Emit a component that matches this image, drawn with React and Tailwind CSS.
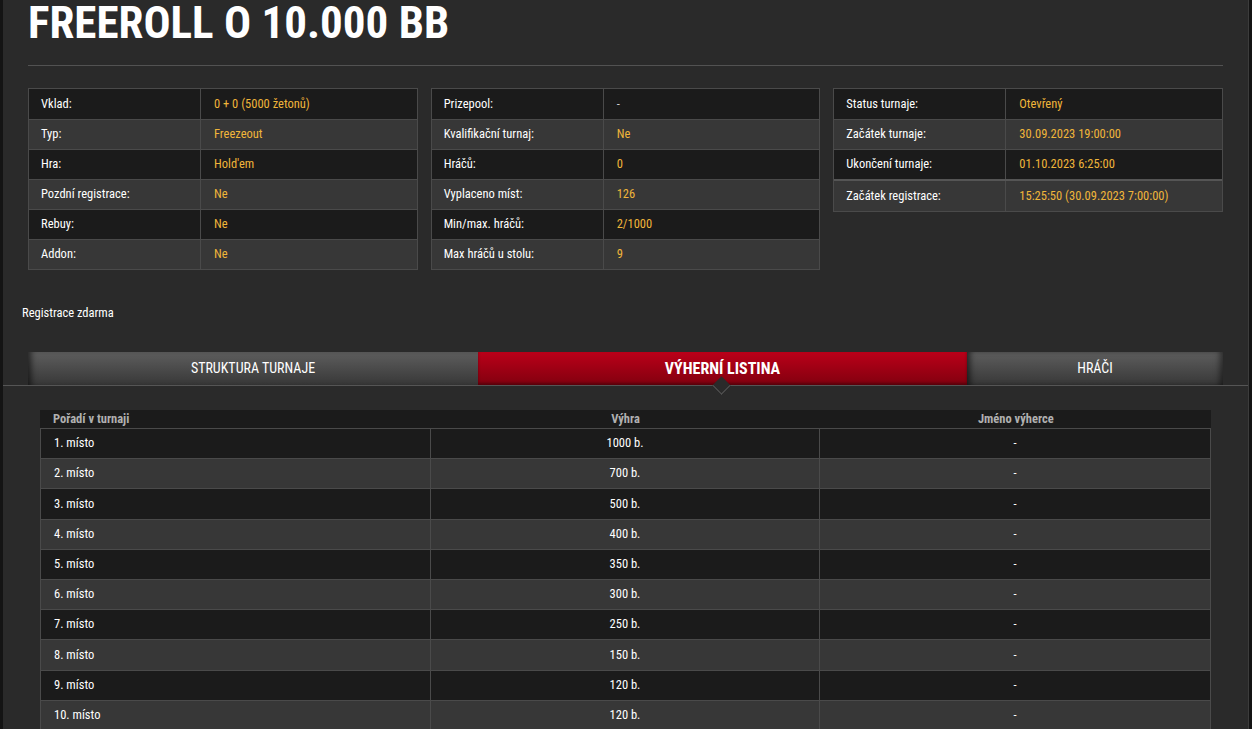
import React from 'react';

const infoLeft = [
  ['Vklad:', '0 + 0 (5000 žetonů)'],
  ['Typ:', 'Freezeout'],
  ['Hra:', "Hold'em"],
  ['Pozdní registrace:', 'Ne'],
  ['Rebuy:', 'Ne'],
  ['Addon:', 'Ne'],
];

const infoMiddle = [
  ['Prizepool:', '-', true],
  ['Kvalifikační turnaj:', 'Ne'],
  ['Hráčů:', '0'],
  ['Vyplaceno míst:', '126'],
  ['Min/max. hráčů:', '2/1000'],
  ['Max hráčů u stolu:', '9'],
];

const infoRight = [
  ['Status turnaje:', 'Otevřený'],
  ['Začátek turnaje:', '30.09.2023 19:00:00'],
  ['Ukončení turnaje:', '01.10.2023 6:25:00'],
  ['Začátek registrace:', '15:25:50 (30.09.2023 7:00:00)'],
];

const prizes = [
  ['1. místo', '1000 b.'],
  ['2. místo', '700 b.'],
  ['3. místo', '500 b.'],
  ['4. místo', '400 b.'],
  ['5. místo', '350 b.'],
  ['6. místo', '300 b.'],
  ['7. místo', '250 b.'],
  ['8. místo', '150 b.'],
  ['9. místo', '120 b.'],
  ['10. místo', '120 b.'],
];

const InfoTable = ({ rows }) => (
  <div className="border border-[#4a4a4a] self-start">
    {rows.map(([label, value, plain], i) => (
      <div
        key={label}
        className={`flex h-[30px] items-center ${i > 0 ? 'border-t border-[#4a4a4a]' : ''} ${
          i % 2 === 0 ? 'bg-[#1b1b1b]' : 'bg-[#373737]'
        } ${i === 3 && rows.length === 4 ? 'h-[32px] border-t-2 border-t-[#555]' : ''}`}
      >
        <div className="w-[172px] h-full flex items-center pl-[12px] text-white border-r border-[#4a4a4a]">
          {label}
        </div>
        <div className={`pl-[13px] ${plain ? 'text-[#cfcfcf]' : 'text-[#f0b53a]'}`}>{value}</div>
      </div>
    ))}
  </div>
);

const App = () => {
  return (
    <div className="min-h-screen bg-[#141414] text-[12.5px] font-['Roboto_Condensed','Liberation_Sans_Narrow','DejaVu_Sans_Condensed',sans-serif]">
      <div className="mx-[3px] min-h-screen bg-[#2a2a2a] border-r border-[#3c3c3c] overflow-hidden">
        <div className="px-[25px]">
          <h1 className="text-[45px] font-bold text-white leading-[46px] pt-0">
            FREEROLL O 10.000 BB
          </h1>
          <div className="mt-[19px] border-t border-[#525252]" />
          <div className="grid grid-cols-3 gap-[13px] mt-[22px]">
            <InfoTable rows={infoLeft} />
            <InfoTable rows={infoMiddle} />
            <InfoTable rows={infoRight} />
          </div>
        </div>

        <p className="pl-[19px] mt-[35px] text-white leading-[16px]">Registrace zdarma</p>

        {/* Tabs */}
        <div className="mt-[31px] px-[25px] flex h-[33px] text-[14px] text-white">
          <div className="w-[450px] flex items-center justify-center bg-gradient-to-b from-[#5e5e5e] to-[#383838] shadow-[inset_6px_0_6px_-3px_rgba(0,0,0,0.6)]">
            STRUKTURA TURNAJE
          </div>
          <div className="w-[489px] flex items-center justify-center text-[16px] font-bold bg-gradient-to-b from-[#bb0019] to-[#82000f] shadow-[inset_0_-2px_3px_rgba(0,0,0,0.35)]">
            VÝHERNÍ LISTINA
          </div>
          <div className="flex-1 flex items-center justify-center bg-gradient-to-b from-[#5e5e5e] to-[#383838] shadow-[inset_6px_0_6px_-3px_rgba(0,0,0,0.6),inset_-6px_0_6px_-3px_rgba(0,0,0,0.5)]">
            HRÁČI
          </div>
        </div>
        <div className="relative border-t border-[#555]">
          <div className="absolute left-[712px] -top-[7px] w-[13px] h-[13px] rotate-45 bg-[#2a2a2a] border-r border-b border-[#555]" />
        </div>

        {/* Prize table */}
        <div className="mx-[37px] mt-[24px]">
          <div className="grid grid-cols-3 h-[18px] items-center bg-[#1b1b1b] text-[#b0b0b0] font-bold">
            <div className="pl-[13px]">Pořadí v turnaji</div>
            <div className="text-center">Výhra</div>
            <div className="text-center">Jméno výherce</div>
          </div>
          <div className="border-l border-r border-[#4a4a4a]">
            {prizes.map(([place, win], i) => (
              <div
                key={place}
                className={`grid grid-cols-3 h-[30.2px] items-center border-t border-[#4a4a4a] text-white ${
                  i % 2 === 0 ? 'bg-[#1b1b1b]' : 'bg-[#373737]'
                }`}
              >
                <div className="pl-[13px] h-full flex items-center border-r border-[#4a4a4a]">{place}</div>
                <div className="h-full flex items-center justify-center border-r border-[#4a4a4a]">{win}</div>
                <div className="text-center">-</div>
              </div>
            ))}
          </div>
        </div>
      </div>
    </div>
  );
};

export default App;
